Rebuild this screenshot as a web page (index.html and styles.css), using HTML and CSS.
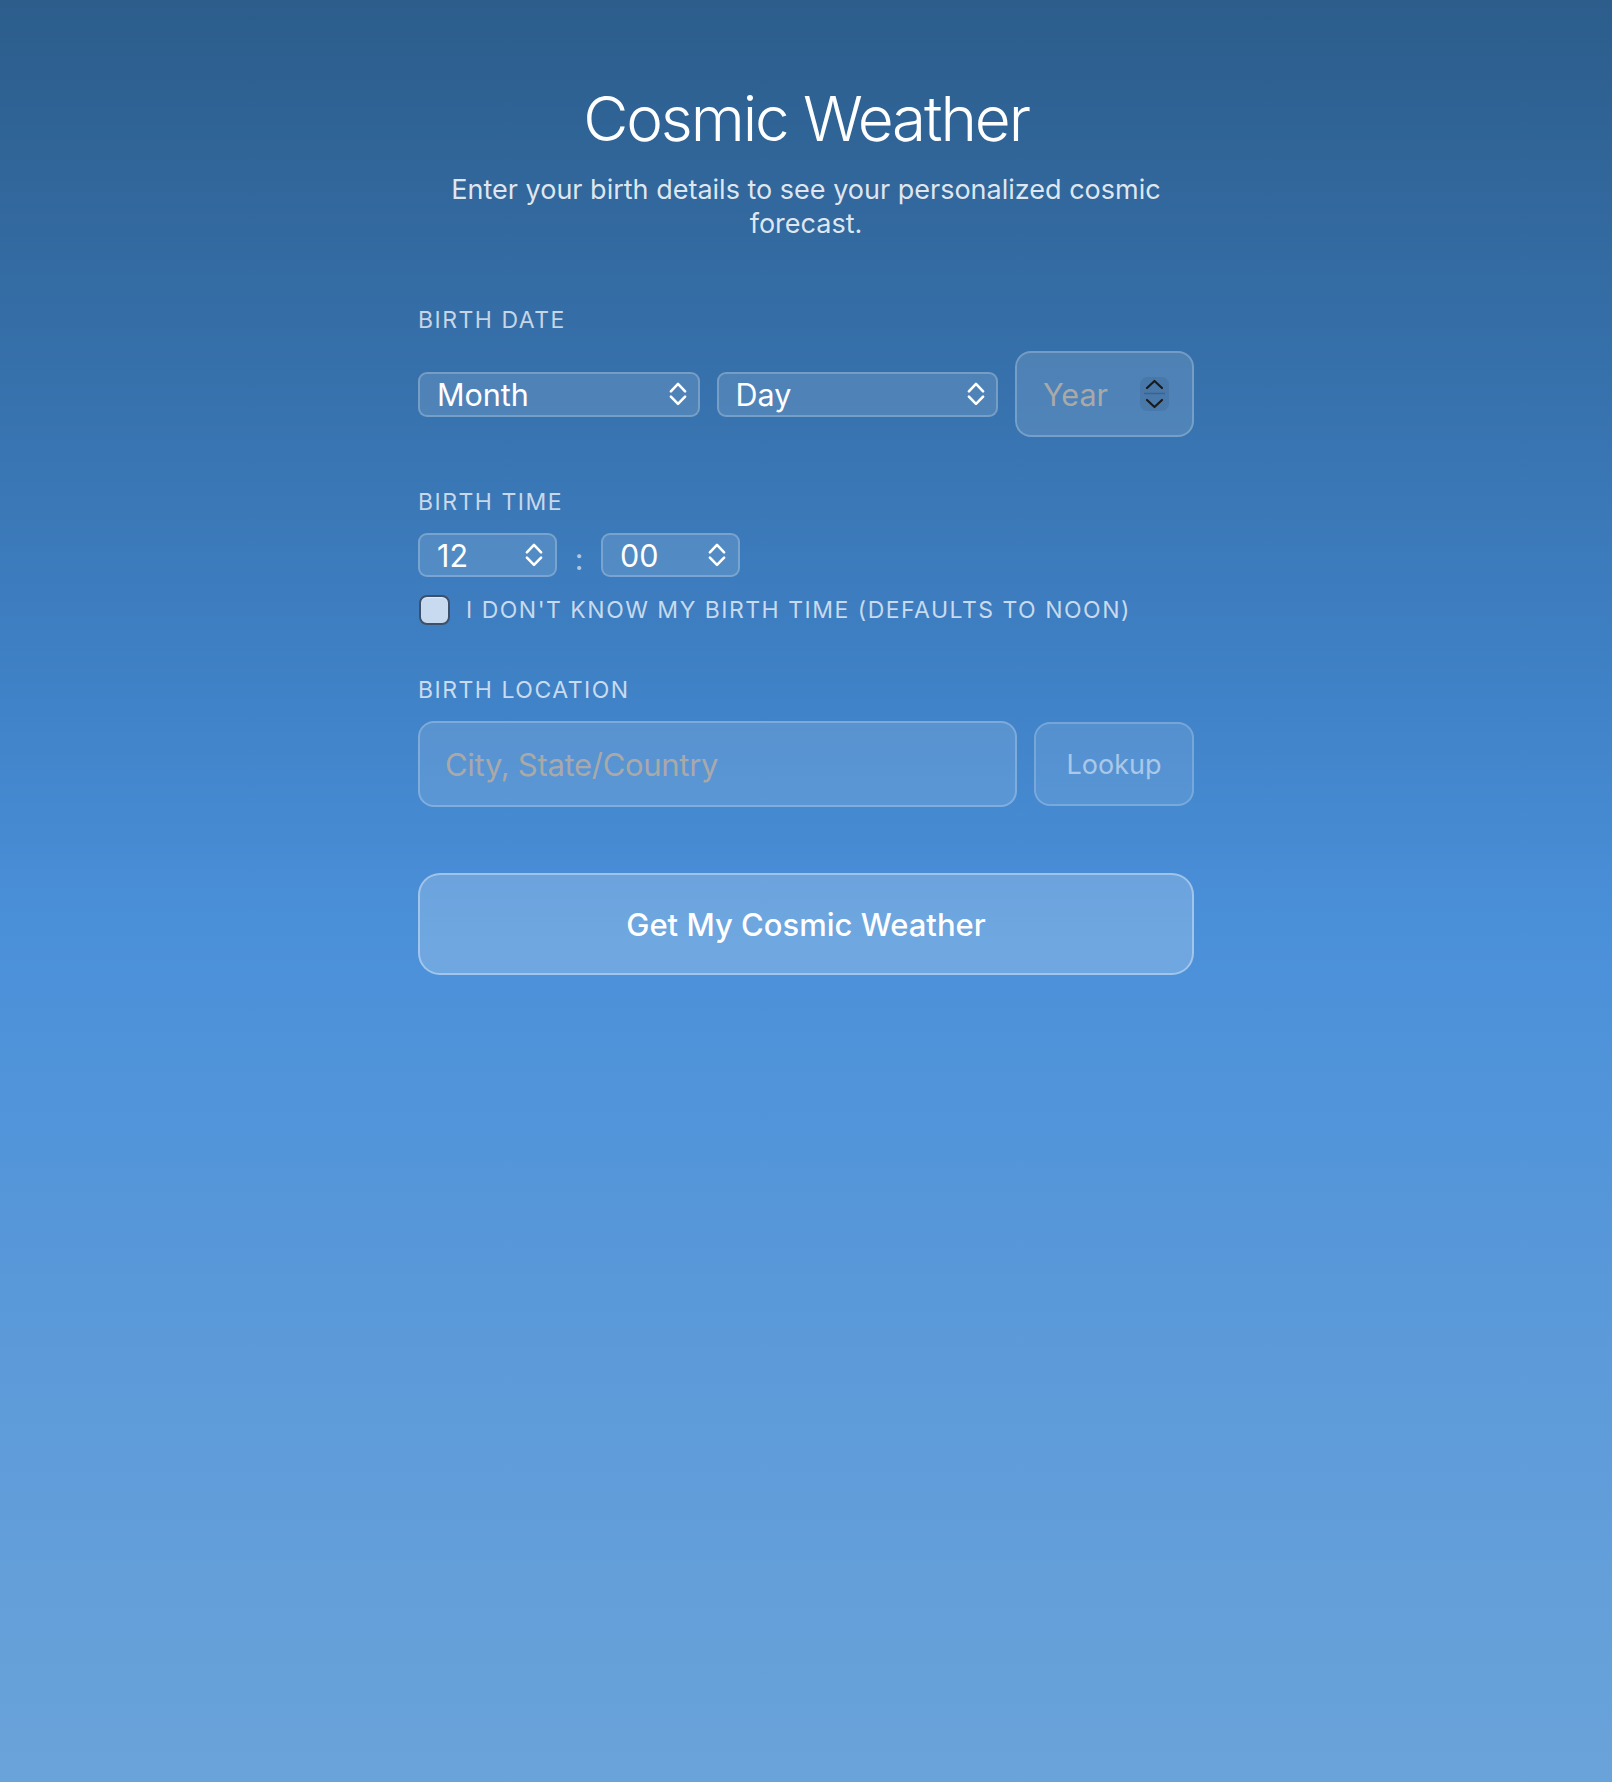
FILE: index.html
```html
<!DOCTYPE html>
<html lang="en">
<head>
<meta charset="utf-8">
<title>Cosmic Weather</title>
<link rel="stylesheet" href="styles.css">
</head>
<body>
<main class="page">
  <header class="intro">
    <h1 class="title">Cosmic Weather</h1>
    <p class="subtitle">Enter your birth details to see your personalized cosmic forecast.</p>
  </header>
  <form class="form">
    <section class="field field-first">
      <div class="label">Birth Date</div>
      <div class="date-row">
        <div class="select select-wide"><span class="select-value">Month</span><svg class="chev" viewBox="0 0 18 24"><path d="M1.9 9.4 L9 1.9 L16.1 9.4 M1.9 14.6 L9 21.9 L16.1 14.6" fill="none" stroke="#fff" stroke-width="2.6" stroke-linecap="round" stroke-linejoin="round"/></svg></div>
        <div class="select select-wide"><span class="select-value">Day</span><svg class="chev" viewBox="0 0 18 24"><path d="M1.9 9.4 L9 1.9 L16.1 9.4 M1.9 14.6 L9 21.9 L16.1 14.6" fill="none" stroke="#fff" stroke-width="2.6" stroke-linecap="round" stroke-linejoin="round"/></svg></div>
        <div class="year-input"><span class="placeholder">Year</span><span class="spinner"><svg class="spin-icon" viewBox="0 0 29 34"><path d="M7 11 L14.5 4 L22 11 M7 23 L14.5 30 L22 23" fill="none" stroke="#1a1a1a" stroke-width="2.2" stroke-linecap="round" stroke-linejoin="round"/><path d="M4 16.5 H25" stroke="rgba(0,0,0,0.18)" stroke-width="1.5"/></svg></span></div>
      </div>
    </section>
    <section class="field">
      <div class="label">Birth Time</div>
      <div class="time-row">
        <div class="select select-time"><span class="select-value">12</span><svg class="chev" viewBox="0 0 18 24"><path d="M1.9 9.4 L9 1.9 L16.1 9.4 M1.9 14.6 L9 21.9 L16.1 14.6" fill="none" stroke="#fff" stroke-width="2.6" stroke-linecap="round" stroke-linejoin="round"/></svg></div>
        <span class="colon">:</span>
        <div class="select select-time"><span class="select-value">00</span><svg class="chev" viewBox="0 0 18 24"><path d="M1.9 9.4 L9 1.9 L16.1 9.4 M1.9 14.6 L9 21.9 L16.1 14.6" fill="none" stroke="#fff" stroke-width="2.6" stroke-linecap="round" stroke-linejoin="round"/></svg></div>
      </div>
      <label class="check-row"><span class="checkbox"></span><span class="check-text">I don't know my birth time (defaults to noon)</span></label>
    </section>
    <section class="field">
      <div class="label">Birth Location</div>
      <div class="location-row">
        <div class="text-input"><span class="placeholder placeholder-loc">City, State/Country</span></div>
        <button type="button" class="lookup">Lookup</button>
      </div>
    </section>
    <button type="button" class="submit">Get My Cosmic Weather</button>
  </form>
</main>
</body>
</html>
```

FILE: styles.css
```css
* { box-sizing: border-box; }
html, body { margin: 0; }
body {
  min-height: 1782px;
  background: linear-gradient(180deg, #2c5d8b 0%, #3e7fc3 36%, #4a90d9 52%, #5c9ad9 76%, #6aa3d9 100%);
  font-family: Inter, "Noto Sans", Arial, sans-serif;
  color: #fff;
}
.page { width: 776px; margin: 0 auto; padding-top: 81px; }
.title { margin: 0; font-size: 62px; font-weight: 300; line-height: 76px; letter-spacing: -2.1px; text-align: center; }
.subtitle { margin: 16px 0 0; font-size: 27px; line-height: 34px; text-align: center; color: rgba(255,255,255,.85); }
.field { margin-top: 51px; }
.field-first { margin-top: 65px; }
.label { font-size: 23px; line-height: 28px; letter-spacing: 1.5px; text-transform: uppercase; color: rgba(255,255,255,.72); margin-bottom: 17px; }
.date-row { display: flex; align-items: center; gap: 17px; }
.select { display: flex; align-items: center; justify-content: space-between; height: 45px; padding: 0 11px 0 17px; background: rgba(255,255,255,.12); border: 2px solid rgba(255,255,255,.22); border-radius: 9px; font-size: 30.5px; }
.select-wide { flex: 1 1 0; }
.select-time { width: 139px; height: 44px; padding-right: 12px; }
.chev { width: 18px; height: 24px; flex: none; }
.year-input { width: 179px; height: 86px; flex: none; display: flex; align-items: center; justify-content: space-between; padding: 0 23px 0 26px; background: rgba(255,255,255,.12); border: 2px solid rgba(255,255,255,.22); border-radius: 16px; font-size: 30.5px; }
.placeholder { color: #a9a9a9; }
.placeholder-loc { font-size: 31px; letter-spacing: -0.3px; }
.spinner { width: 29px; height: 34px; border-radius: 7px; background: rgba(0,0,0,.07); display: flex; }
.spin-icon { width: 29px; height: 34px; }
.time-row { display: flex; align-items: center; gap: 16px; }
.colon { width: 12px; margin-top: 8px; text-align: center; font-size: 30px; color: rgba(255,255,255,.62); }
.check-row { display: flex; align-items: center; gap: 16px; margin-top: 18px; padding-left: 1px; }
.checkbox { width: 31px; height: 30px; border-radius: 8px; border: 2px solid #3e5069; background: #c8daf0; box-shadow: inset 0 1px 1px rgba(255,255,255,.5); flex: none; }
.check-text { font-size: 23px; line-height: 28px; letter-spacing: 1.5px; text-transform: uppercase; color: rgba(255,255,255,.72); }
.location-row { display: flex; gap: 17px; align-items: center; }
.text-input { flex: 1; height: 86px; display: flex; align-items: center; padding: 0 25px; background: rgba(255,255,255,.12); border: 2px solid rgba(255,255,255,.22); border-radius: 16px; }
.lookup { width: 160px; height: 84px; flex: none; background: rgba(255,255,255,.1); border: 2px solid rgba(255,255,255,.2); border-radius: 16px; color: rgba(255,255,255,.5); font: 400 27px Inter, "Noto Sans", sans-serif; }
.submit { display: block; width: 100%; height: 102px; margin-top: 66px; background: rgba(255,255,255,.2); border: 2px solid rgba(255,255,255,.35); border-radius: 22px; color: #fff; font: 500 31px Inter, "Noto Sans", sans-serif; }
```
